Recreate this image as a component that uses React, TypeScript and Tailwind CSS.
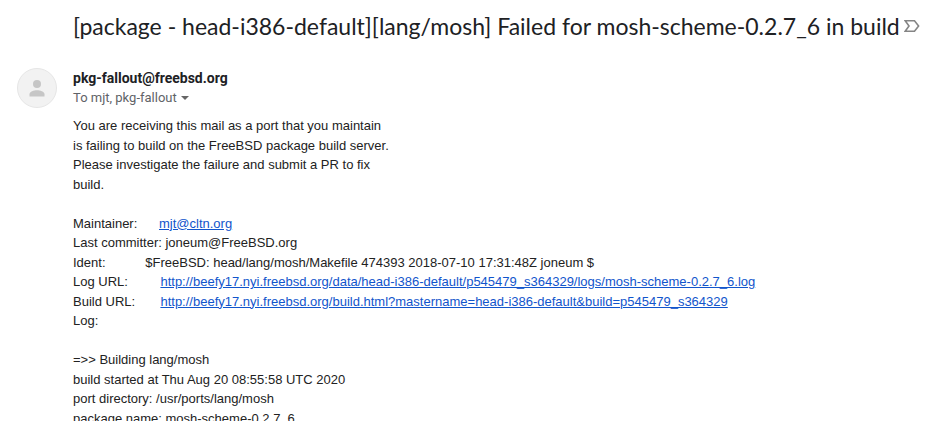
import { Fragment } from 'react';

const intro = [
  'You are receiving this mail as a port that you maintain',
  'is failing to build on the FreeBSD package build server.',
  'Please investigate the failure and submit a PR to fix',
  'build.',
];

const fields = [
  { label: 'Maintainer:      ', text: 'mjt@cltn.org', href: 'mailto:mjt@cltn.org' },
  { label: 'Last committer: ', text: 'joneum@FreeBSD.org' },
  { label: 'Ident:           ', text: '$FreeBSD: head/lang/mosh/Makefile 474393 2018-07-10 17:31:48Z joneum $' },
  {
    label: 'Log URL:         ',
    text: 'http://beefy17.nyi.freebsd.org/data/head-i386-default/p545479_s364329/logs/mosh-scheme-0.2.7_6.log',
    href: 'http://beefy17.nyi.freebsd.org/data/head-i386-default/p545479_s364329/logs/mosh-scheme-0.2.7_6.log',
  },
  {
    label: 'Build URL:       ',
    text: 'http://beefy17.nyi.freebsd.org/build.html?mastername=head-i386-default&build=p545479_s364329',
    href: 'http://beefy17.nyi.freebsd.org/build.html?mastername=head-i386-default&build=p545479_s364329',
  },
  { label: 'Log:', text: '' },
];

const log = [
  '=>> Building lang/mosh',
  'build started at Thu Aug 20 08:55:58 UTC 2020',
  'port directory: /usr/ports/lang/mosh',
  'package name: mosh-scheme-0.2.7_6',
];

function Avatar() {
  return (
    <div className="flex h-10 w-10 items-center justify-center rounded-full border border-[#e6e6e6] bg-[#f2f2f2]">
      <svg viewBox="0 0 16 18" className="h-[18px] w-4 fill-[#c6c6c6]" aria-hidden="true">
        <circle cx="8" cy="5" r="4" />
        <path d="M0.5 17.5v-2.2c0-2.6 4.5-4 7.5-4s7.5 1.4 7.5 4v2.2z" />
      </svg>
    </div>
  );
}

export default function App() {
  return (
    <main className="h-screen overflow-hidden bg-white pl-[17px] text-[#222222]">
      {/* Subject */}
      <header className="flex items-center gap-1 pt-3 pl-14">
        <h1 className="font-['Lato',sans-serif] text-[23px] leading-7 whitespace-nowrap text-[#202124]">
          [package - head-i386-default][lang/mosh] Failed for mosh-scheme-0.2.7_6 in build
        </h1>
        <button type="button" aria-label="Mark as important" className="shrink-0">
          <svg viewBox="0 0 16 14" className="h-3.5 w-4 fill-none stroke-[#858585]" strokeWidth="1.6" aria-hidden="true">
            <path d="M1.2 1.8h9.3L14.6 7l-4.1 5.2H1.2L5 7z" />
          </svg>
        </button>
      </header>

      {/* Sender */}
      <section className="mt-7 flex gap-4 font-['Roboto',sans-serif]">
        <Avatar />
        <div>
          <div className="text-[14px] leading-5 font-bold text-[#202124]">pkg-fallout@freebsd.org</div>
          <button type="button" className="flex items-center gap-1 text-[13px] leading-5 text-[#5f6368]">
            To mjt, pkg-fallout
            <svg viewBox="0 0 8 4" className="h-1 w-2 fill-[#666666]" aria-hidden="true">
              <path d="M0 0h8L4 4z" />
            </svg>
          </button>
        </div>
      </section>

      {/* Message */}
      <article className="mt-2 pl-14 font-['Liberation_Sans',Arial,sans-serif] text-[13px] leading-normal whitespace-pre">
        {intro.map((line) => (
          <Fragment key={line}>
            {line}
            <br />
          </Fragment>
        ))}
        <br />
        {fields.map(({ label, text, href }) => (
          <Fragment key={label}>
            {label}
            {href ? (
              <a href={href} className="text-[#1155cc] underline">{text}</a>
            ) : (
              text
            )}
            <br />
          </Fragment>
        ))}
        <br />
        {log.map((line) => (
          <Fragment key={line}>
            {line}
            <br />
          </Fragment>
        ))}
      </article>
    </main>
  );
}
